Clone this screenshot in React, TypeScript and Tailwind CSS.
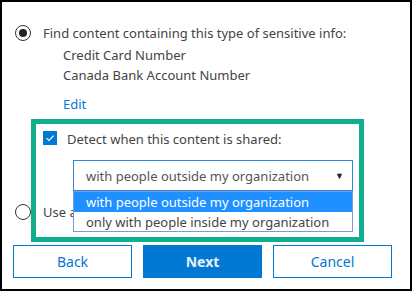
import React from "react";

export default function App() {
  return (
    <div className="w-[413px] h-[291px] bg-white">
      <div
        className="relative w-[412px] h-[291px] border-2 border-black bg-white text-[#444] text-[13px] leading-[20px]"
        style={{ fontFamily: '"Noto Sans", "Open Sans", sans-serif' }}
      >
        <div className="pl-[13px] pt-[21px]">
          <div className="flex items-center">
            <div className="w-[16px] h-[16px] rounded-full border-[1.5px] border-[#333] flex items-center justify-center">
              <div className="w-[8px] h-[8px] rounded-full bg-[#222]" />
            </div>
            <span className="ml-[12px]">Find content containing this type of sensitive info:</span>
          </div>
          <div className="pl-[48px] mt-[2px]">
            <div>Credit Card Number</div>
            <div>Canada Bank Account Number</div>
            <div className="mt-[9px] text-[#0078d4]">Edit</div>
          </div>
          <div className="flex items-center mt-[15px] pl-[28px]">
            <div className="w-[14px] h-[14px] bg-[#0078d4] flex items-center justify-center -mt-[2px]">
              <svg width="10" height="10" viewBox="0 0 10 10">
                <path d="M1.5 5.2 L4 7.5 L8.6 2.6" stroke="white" strokeWidth="1.1" fill="none" />
              </svg>
            </div>
            <span className="ml-[10px]">Detect when this content is shared:</span>
          </div>
          <div className="mt-[11px] ml-[58px] w-[280px] h-[31px] border border-[#2f86dd] flex items-center justify-between pl-[12px] pr-[8px]">
            <span className="text-[#555]">with people outside my organization</span>
            <span className="text-[9px] text-[#222]">▼</span>
          </div>
          <div className="flex items-center mt-[11px]">
            <div className="w-[16px] h-[16px] rounded-full border-[1.5px] border-[#333]" />
            <span className="ml-[12px] whitespace-nowrap">Use a</span>
          </div>
          <div className="flex gap-[11px] mt-[23px] -ml-[2px] text-[14px]">
            <button className="w-[119px] h-[33px] border border-[#0078d4] text-[#0078d4] bg-white">Back</button>
            <button className="w-[119px] h-[33px] bg-[#0078d4] text-[#e8f1fb] font-bold">Next</button>
            <button className="w-[119px] h-[33px] border border-[#0078d4] text-[#0078d4] bg-white">Cancel</button>
          </div>
        </div>

        <div className="absolute left-[71px] top-[189px] w-[280px] h-[41px] border border-[#7b9ad8] bg-white">
          <div className="h-[20px] bg-[#1e90ff] text-white pl-[12px] flex items-center">
            with people outside my organization
          </div>
          <div className="h-[19px] pl-[12px] flex items-center">only with people inside my organization</div>
        </div>

        <div className="absolute left-[29px] top-[117px] w-[333px] h-[123px] border-[5px] border-[#11ae8e] pointer-events-none" />
      </div>
    </div>
  );
}
